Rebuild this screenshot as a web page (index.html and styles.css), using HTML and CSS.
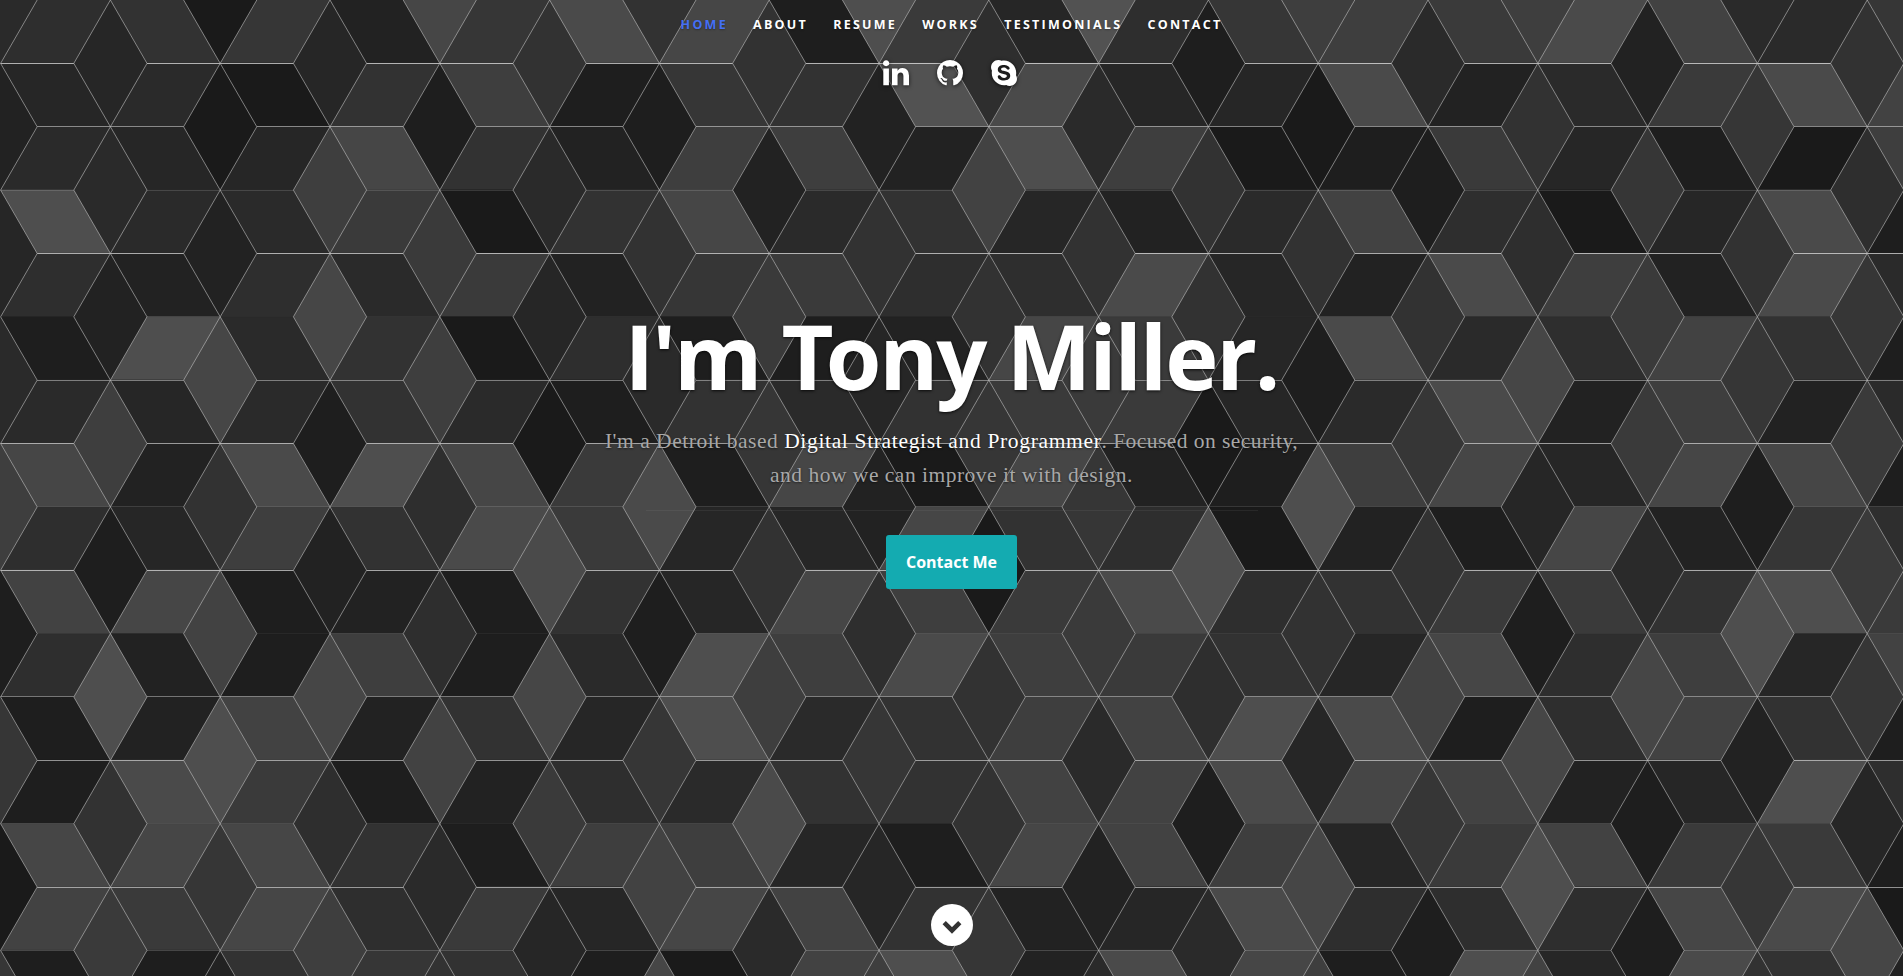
FILE: index.html
```html
<!DOCTYPE html>
<html lang="en">
<head>
<meta charset="utf-8">
<title>Tony Miller</title>
<link rel="stylesheet" href="styles.css">
</head>
<body>
<header class="hero">
  <svg class="pattern" id="pattern" width="1903" height="976" viewBox="0 0 1903 976" aria-hidden="true"></svg>
  <nav class="nav">
    <a class="nav-link current" href="#">Home</a>
    <a class="nav-link" href="#">About</a>
    <a class="nav-link" href="#">Resume</a>
    <a class="nav-link" href="#">Works</a>
    <a class="nav-link" href="#">Testimonials</a>
    <a class="nav-link" href="#">Contact</a>
  </nav>
  <div class="social">
    <svg class="icon" viewBox="0 128 1536 1536"><path d="M349 625v991h-330v-991h330zM370 319q1 73-50.5 122t-135.5 49h-2q-82 0-132-49t-50-122q0-74 51.5-122.5t134.5-48.5 133 48.500 51 122.500zM1536 1048v568h-329v-530q0-105-40.500-164.500t-126.500-59.500q-63 0-105.500 34.500t-63.500 85.500q-11 30-11 81v553h-329q2-399 2-647t-1-296l-1-48h329v144h-2q20-32 41-56t56.500-52 87-43.500 114.500-15.500q171 0 275 113.500t104 332.500z"/></svg>
    <svg class="icon" viewBox="0 128 1536 1536"><path d="M768 128q209 0 385.500 103t279.500 279.500 103 385.500q0 251-146.500 451.500t-378.500 277.500q-27 5-40-7t-13-30q0-3 .5-76.500t.5-134.500q0-97-52-142 57-6 102.500-18t94-39 81-66.500 53-105 20.500-150.500q0-119-79-206 37-91-8-204-28-9-81 11t-92 44l-38 24q-93-26-192-26t-192 26q-16-11-42.500-27t-83.500-38.500-85-13.500q-45 113-8 204-79 87-79 206 0 85 20.500 150t52.500 105 80.500 67 94 39 102.500 18q-39 36-49 103-21 10-45 15t-57 5-65.500-21.500-55.500-62.500q-19-32-48.500-52t-49.500-24l-20-3q-21 0-29 4.500t-5 11.500 9 14 13 12l7 5q22 10 43.500 38t31.500 51l10 23q13 38 44 61.500t67 30 69.500 7 55.500-3.500l23-4q0 38 .5 88.500t.5 54.500q0 18-13 30t-40 7q-232-77-378.500-277.500t-146.500-451.500q0-209 103-385.500t279.500-279.500 385.500-103z"/></svg>
    <svg class="icon" viewBox="0 0 24 24"><path d="M12.069 18.874c-4.023 0-5.820-1.979-5.820-3.464 0-.765.561-1.296 1.333-1.296 1.723 0 1.273 2.477 4.487 2.477 1.641 0 2.550-.895 2.550-1.811 0-.551-.269-1.160-1.354-1.429l-3.576-.895c-2.880-.724-3.403-2.286-3.403-3.751 0-3.047 2.861-4.191 5.549-4.191 2.471 0 5.393 1.373 5.393 3.199 0 .784-.688 1.240-1.453 1.240-1.469 0-1.198-2.037-4.164-2.037-1.469 0-2.292.664-2.292 1.617s1.153 1.258 2.157 1.487l2.637.587c2.891.649 3.624 2.346 3.624 3.944 0 2.476-1.902 4.324-5.722 4.324m11.084-4.882c.12-.675.181-1.363.181-2.052 0-1.529-.301-3.012-.898-4.420-.569-1.348-1.395-2.562-2.427-3.596-1.049-1.033-2.247-1.856-3.595-2.426-1.318-.631-2.801-.93-4.328-.93-.72 0-1.444.07-2.143.204C8.910.274 7.829 0 6.731 0c-1.789 0-3.470.698-4.736 1.967C.729 3.235.032 4.923.032 6.716c0 1.143.292 2.265.844 3.258-.114.645-.172 1.299-.172 1.955 0 1.530.3 3.017.884 4.416.568 1.362 1.378 2.576 2.427 3.609 1.034 1.050 2.247 1.857 3.595 2.442 1.394.6 2.877.898 4.404.898.659 0 1.334-.06 1.977-.179 1.002.569 2.126.871 3.294.871 1.783 0 3.459-.69 4.733-1.963 1.259-1.259 1.962-2.951 1.962-4.749 0-1.138-.299-2.262-.853-3.266"/></svg>
  </div>
  <main class="banner">
    <h1 class="name">I'm <span class="kern">T</span>ony Miller.</h1>
    <p class="tagline"><span class="part-a">I'm a Detroit based </span><strong class="role">Digital Strategist and Programmer</strong><span class="part-b">. Focused on security,</span><br><span class="part-c">and how we can improve it with design.</span></p>
    <hr class="rule">
    <a class="button" href="#">Contact Me</a>
  </main>
  <a class="scroll" href="#" aria-label="Scroll down">
    <svg width="42" height="42" viewBox="0 0 42 42"><circle cx="21" cy="21" r="21" fill="#fff"/><path d="M13.200 18.700 21 26.500 28.800 18.700" fill="none" stroke="#333" stroke-width="4.600"/></svg>
  </a>
</header>
<script src="pattern.js"></script>
</body>
</html>
```

FILE: styles.css
```css
* { box-sizing: border-box; }
body { margin: 0; background: #2b2b2b; font-family: "Open Sans", "Noto Sans", sans-serif; }
.hero { position: relative; height: 976px; overflow: hidden; display: flex; flex-direction: column; align-items: center; }
.pattern { position: absolute; left: 0; top: 0; }
.nav, .social, .banner, .scroll { position: relative; }
.nav { display: flex; gap: 25.200px; height: 48px; padding-top: 1px; align-items: center; }
.nav-link { color: #fff; font-size: 12.500px; font-weight: 700; line-height: 24px; letter-spacing: 2.250px; text-transform: uppercase; text-decoration: none; text-shadow: 0 1px 2px rgba(0,0,0,.3); }
.nav-link.current { color: #446ff5; }
.social { display: flex; gap: 28.300px; height: 26px; margin-top: 12px; margin-right: 3px; }
.icon { width: 26px; height: 26px; fill: #fff; overflow: visible; filter: drop-shadow(0 1px 2px rgba(0,0,0,.7)); }
.banner { display: flex; flex-direction: column; align-items: center; margin-top: 220px; }
.name { margin: 0; color: #fff; font-size: 90px; line-height: 99px; font-weight: 700; letter-spacing: -2.150px; white-space: nowrap; text-shadow: 0 1px 3px rgba(0,0,0,.8); }
.kern { letter-spacing: -8px; }
.tagline { margin: 19px 0 0; text-align: center; white-space: nowrap; font-family: "Liberation Serif", serif; font-size: 21.500px; line-height: 34.200px; color: #a8a8a8; text-shadow: 0 1px 2px rgba(0,0,0,.5); }
.role { color: #fff; font-weight: 400; letter-spacing: .66px; }
.part-a { letter-spacing: .53px; }
.part-b { letter-spacing: .45px; }
.part-c { letter-spacing: .5px; }
.rule { width: 612px; height: 1px; border: 0; margin: 18px 0 24px; background: rgba(150,150,150,.12); }
.button { width: 131px; height: 54px; border-radius: 3px; background: #14abb1; color: #fff; font-size: 16px; font-weight: 700; line-height: 54px; text-align: center; text-decoration: none; }
.scroll { width: 42px; height: 42px; margin-top: 315px; }
.scroll svg { display: block; }
```

FILE: pattern.js
```javascript
// Rhombus tiling. Each hex digit is a shade, from #1a1a1a upwards in steps of 4.
const SIDE = 73.2, HALF = SIDE / 2, STEP = 63.36, X0 = 0.6;

// Leaning tiles, one string per strip, one digit per column of 1.5 sides.
const leaning = [
  "56727cb1835798ca47", "34069176ec33c248ca", "433b62992d90183109",
  "d44806b46324a503c1", "5254827855c32c92c4", "1d4605112b83c45a61",
  "4346416468834c2924", "b2cdb81b0b219b3bb1", "5396c833b65021b275",
  "ab12163b98c56886d8", "521914d9c9863b593a", "12a263d469adc15a61",
  "1c8125466aacba23d5", "bbb619931ba938a881", "a8b583ba623c555bc0",
  "1167610ad2cb1d3c62"
];

// Upright tiles, first row starts above the top edge.
const upright = [
  "40b6de994", "336651426", "201124067", "4942a6175", "328666656", "2b3866687",
  "4b94381b7", "910770788", "965c27d31", "12c60d648", "1a515861d", "dbb965ab7",
  "7da7743b2", "658c61713", "074a32bd7", "89347411b", "726b949a6"
];

// Opacity of the horizontal joint at the foot of each strip.
const joints = [.64, .46, .14, .62, .02, .4, .55, .13, .6, .05, .38, .52, .05, .52, .18];

const svg = document.getElementById("pattern");
const shade = d => {
  const v = 0x1a + parseInt(d, 16) * 4;
  return `rgb(${v},${v},${v})`;
};
let tiles = "", lines = "", flat = "";

leaning.forEach((row, k) => {
  const top = k * STEP, bottom = top + STEP;
  [...row].forEach((d, j) => {
    const x = X0 + j * 1.5 * SIDE;
    const up = (k + j) % 2 === 0;
    const t = up ? x + HALF : x, b = up ? x : x + HALF;
    tiles += `<path fill="${shade(d)}" stroke="${shade(d)}" d="M${t} ${top}h${SIDE}L${b + SIDE} ${bottom}h${-SIDE}z"/>`;
    lines += `M${t} ${top}L${b} ${bottom}M${t + SIDE} ${top}L${b + SIDE} ${bottom}`;
    if (k < joints.length) {
      flat += `<rect x="${b}" y="${Math.floor(bottom)}" width="${SIDE}" height="1" fill="#fff" fill-opacity="${joints[k]}"/>`;
    }
  });
});

let diamonds = "";
upright.forEach((row, i) => {
  const k = i - 1, top = k * STEP;
  [...row].forEach((d, m) => {
    const x = X0 + m * 3 * SIDE + (k % 2 === 0 ? 1.5 * SIDE : 0);
    diamonds += `<path fill="${shade(d)}" d="M${x} ${top}l${HALF} ${STEP}l${-HALF} ${STEP}l${-HALF} ${-STEP}z"/>`;
  });
});

svg.innerHTML = tiles + diamonds + flat +
  `<path d="${lines}" fill="none" stroke="#c4c4c4" stroke-width=".6"/>`;
```
